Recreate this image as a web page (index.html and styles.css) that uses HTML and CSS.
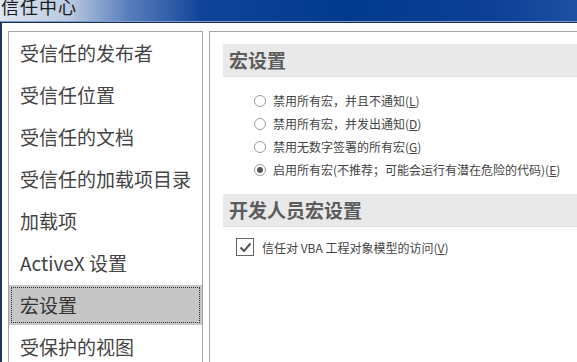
FILE: index.html
```html
<!DOCTYPE html>
<html lang="zh-CN">
<head>
    <meta charset="UTF-8">
    <title>信任中心</title>
    <link rel="stylesheet" href="styles.css">
</head>
<body>

    <!-- Title bar -->
    <div class="titlebar">
        <span class="title-text">信任中心</span>
    </div>

    <div class="frame">
        <!-- Left navigation -->
        <ul class="nav">
            <li class="nav-item">受信任的发布者</li>
            <li class="nav-item">受信任位置</li>
            <li class="nav-item">受信任的文档</li>
            <li class="nav-item">受信任的加载项目录</li>
            <li class="nav-item">加载项</li>
            <li class="nav-item">ActiveX 设置</li>
            <li class="nav-item selected">宏设置</li>
            <li class="nav-item">受保护的视图</li>
        </ul>

        <!-- Settings panel -->
        <div class="panel">
            <h2 class="section-header">宏设置</h2>
            <div class="options">
                <label class="option"><span class="radio"></span>禁用所有宏，并且不通知(<u>L</u>)</label>
                <label class="option"><span class="radio"></span>禁用所有宏，并发出通知(<u>D</u>)</label>
                <label class="option"><span class="radio"></span>禁用无数字签署的所有宏(<u>G</u>)</label>
                <label class="option"><span class="radio checked"></span>启用所有宏(不推荐；可能会运行有潜在危险的代码)(<u>E</u>)</label>
            </div>

            <h2 class="section-header">开发人员宏设置</h2>
            <label class="check-row">
                <span class="checkbox">
                    <svg width="15" height="15" viewBox="0 0 15 15">
                        <path d="M2.5 7.5 L6 11 L12.5 3.5" fill="none" stroke="#555" stroke-width="2"/>
                    </svg>
                </span>
                信任对 VBA 工程对象模型的访问(<u>V</u>)
            </label>
        </div>
    </div>

</body>
</html>
```

FILE: styles.css
```css
/* General page styles */
body {
    margin: 0;
    width: 577px;
    height: 362px;
    overflow: hidden;
    background-color: #ffffff;
    font-family: "Noto Sans CJK SC", "Noto Sans", sans-serif;
    color: #444;
}

/* Title bar */
.titlebar {
    height: 21px;
    overflow: hidden;
    background: linear-gradient(90deg, #dfe6f0 0%, #b9c9e0 12%, #5a80bb 22%, #10449a 35%, #003a8f 60%, #0d4096 85%, #1c50a2 100%);
    border-bottom: 1px solid #7c9ccb;
    box-shadow: 0 1px 0 #1a2c52;
}

.title-text {
    display: block;
    margin-top: -5px;
    padding-left: 1px;
    font-size: 18px;
    line-height: 22px;
    letter-spacing: 1px;
    color: #1b1b1b;
}

/* Window body */
.frame {
    display: flex;
    height: 339px;
    margin-top: 1px;
    padding: 8px 0 0 6px;
    border-left: 2px solid #1c3664;
    box-sizing: border-box;
}

/* Left navigation */
.nav {
    display: flex;
    flex-direction: column;
    list-style: none;
    margin: 0;
    padding: 0;
    width: 195px;
    flex-shrink: 0;
    border: 1px solid #a5a5a5;
    border-bottom: none;
    box-sizing: border-box;
}

.nav-item {
    flex-shrink: 0;
    height: 40px;
    margin: 1px 0;
    padding-left: 11px;
    font-size: 19px;
    line-height: 40px;
    color: #444;
    white-space: nowrap;
    box-sizing: border-box;
}

.nav-item.selected {
    background-color: #c6c6c6;
    outline: 1px dotted #333;
    outline-offset: -3px;
    color: #333;
}

/* Settings panel */
.panel {
    flex: 1;
    margin-left: 6px;
    padding: 12px 0 0 13px;
    border-left: 1px solid #a5a5a5;
    border-top: 1px solid #a5a5a5;
}

.section-header {
    margin: 0;
    height: 33px;
    padding-left: 6px;
    background-color: #e9e9e9;
    border-bottom: 1px solid #e0e0e0;
    box-sizing: border-box;
    font-size: 19px;
    font-weight: bold;
    line-height: 32px;
    color: #5c5c5c;
}

.options {
    display: flex;
    flex-direction: column;
    padding: 12px 0 13px 31px;
}

.option {
    display: flex;
    align-items: center;
    height: 23px;
    font-size: 12px;
    color: #444;
    white-space: nowrap;
}

.radio {
    width: 12px;
    height: 12px;
    margin-right: 7px;
    border: 1px solid #9d9d9d;
    border-radius: 50%;
    box-sizing: border-box;
    background-color: #fff;
    position: relative;
}

.radio.checked::after {
    content: "";
    position: absolute;
    left: 2px;
    top: 2px;
    width: 6px;
    height: 6px;
    border-radius: 50%;
    background-color: #555;
}

.check-row {
    display: flex;
    align-items: center;
    margin: 11px 0 0 13px;
    font-size: 12px;
    color: #444;
}

.checkbox {
    display: flex;
    align-items: center;
    justify-content: center;
    width: 18px;
    height: 18px;
    margin-right: 8px;
    border: 1px solid #666;
    box-sizing: border-box;
}

u {
    text-decoration: underline;
}
```
